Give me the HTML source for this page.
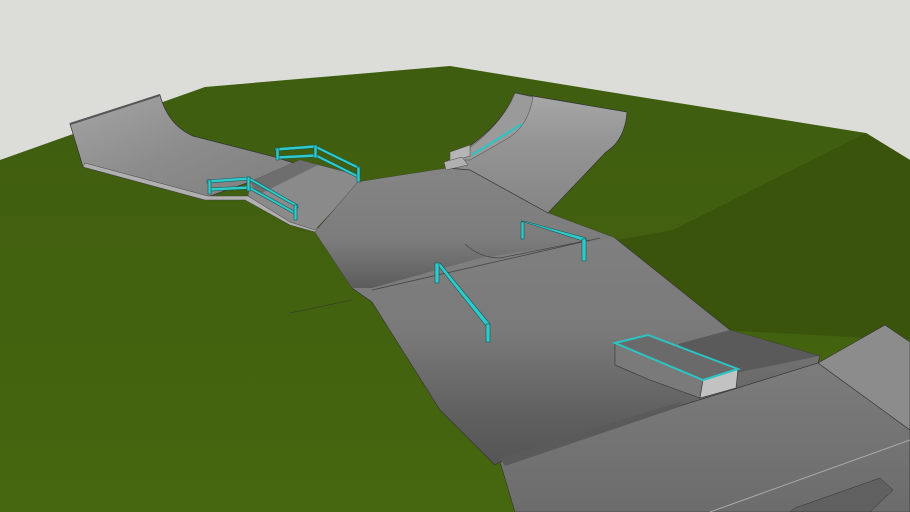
<!DOCTYPE html>
<html><head><meta charset="utf-8"><style>html,body{margin:0;padding:0;background:#dcdcd9;}svg{display:block}</style></head>
<body>
<svg width="910" height="512" viewBox="0 0 910 512" xmlns="http://www.w3.org/2000/svg">
<defs>
<linearGradient id="gr" x1="0" y1="0" x2="0" y2="1"><stop offset="0" stop-color="#3f5d0f"/><stop offset="1" stop-color="#46660f"/></linearGradient>
<linearGradient id="qp" x1="0" y1="0" x2="1" y2="1"><stop offset="0" stop-color="#a5a5a5"/><stop offset="0.5" stop-color="#8c8c8c"/><stop offset="1" stop-color="#7d7d7d"/></linearGradient>
<linearGradient id="qp2" x1="0" y1="0" x2="0" y2="1"><stop offset="0" stop-color="#a8a8a8"/><stop offset="0.4" stop-color="#959595"/><stop offset="1" stop-color="#858585"/></linearGradient>
<linearGradient id="run" x1="0" y1="0" x2="0" y2="1"><stop offset="0" stop-color="#838383"/><stop offset="0.55" stop-color="#7a7a7a"/><stop offset="0.85" stop-color="#5e5e5e"/><stop offset="1" stop-color="#555"/></linearGradient>
<linearGradient id="plaza" x1="0" y1="0" x2="0" y2="1"><stop offset="0" stop-color="#858585"/><stop offset="0.6" stop-color="#7c7c7c"/><stop offset="1" stop-color="#5c5c5c"/></linearGradient>
<linearGradient id="plate" x1="0" y1="0" x2="0" y2="1"><stop offset="0" stop-color="#7c7c7c"/><stop offset="1" stop-color="#6c6c6c"/></linearGradient>
</defs>
<rect width="910" height="512" fill="#dcdcd9"/>
<polygon points="0,160 205,87 450,66 628,95 866,133 910,160 910,512 0,512" fill="url(#gr)"/>
<polygon points="866,133 910,160 910,340 720,330 618,240 673,230" fill="#3a540c"/>
<path d="M70,124 L160,95 Q168,125 193,136 L275,157 L300,165 L250,182 L210,196 L205,200 L83,167 Q78,150 70,124 Z" fill="url(#qp)" stroke="#333" stroke-width="0.7"/>
<polygon points="83,167 205,200 245,200 290,225 315,232 318,228 292,220 248,196 208,196 85,163" fill="#b0b0b0" stroke="#444" stroke-width="0.5"/>
<line x1="70" y1="124" x2="160" y2="95" stroke="#555" stroke-width="2"/>
<polygon points="250,182 300,160 358,175 360,182 315,230 290,222 248,196" fill="#8a8a8a" stroke="#444" stroke-width="0.5"/>
<polygon points="250,182 300,160 318,165 258,195" fill="#6e6e6e"/>
<polygon points="315,232 358,182 448,168 470,170 548,213 615,238 730,330 820,356 818,363 500,462 495,465 440,410 372,302 352,288" fill="url(#run)" stroke="#333" stroke-width="0.6"/>
<polygon points="315,232 358,182 448,168 470,170 548,213 615,238 600,240 480,258 372,288 352,288" fill="url(#plaza)"/>
<line x1="372" y1="290" x2="600" y2="238" stroke="#444" stroke-width="0.8"/>
<path d="M465,244 Q480,258 500,258 L590,240" fill="none" stroke="#444" stroke-width="0.7"/>
<line x1="290" y1="313" x2="352" y2="300" stroke="#333" stroke-width="0.6"/>
<path d="M515,93 L627,112 Q625,140 606,152 L548,213 L470,170 L448,168 L448,160 Q500,130 515,93 Z" fill="url(#qp2)" stroke="#333" stroke-width="0.7"/>
<path d="M515,93 L533,97 Q528,128 505,140 L470,160 L452,160 Q500,130 515,93 Z" fill="#9a9a9a" stroke="#444" stroke-width="0.5"/>
<polygon points="450,152 470,145 470,156 450,162" fill="#b5b5b5" stroke="#444" stroke-width="0.5"/>
<polygon points="444,162 462,157 468,165 446,170" fill="#b0b0b0" stroke="#444" stroke-width="0.5"/>
<line x1="472" y1="155" x2="522" y2="124" stroke="#2cc4c4" stroke-width="2.2"/>
<polygon points="678,344 730,330 820,356 740,372 720,388" fill="#5a5a5a"/>
<polygon points="615,343 703,380 700,398 650,380 615,365" fill="#7a7a7a" stroke="#333" stroke-width="0.6"/>
<polygon points="703,380 738,369 736,388 700,398" fill="#c2c2c2" stroke="#333" stroke-width="0.6"/>
<polygon points="615,343 648,335 738,369 703,380" fill="#6a6a6a" stroke="#2cc4c4" stroke-width="2"/>
<polygon points="500,462 818,363 910,430 910,512 515,512" fill="url(#plate)" stroke="#333" stroke-width="0.6"/>
<polygon points="500,458 680,402 682,406 505,466" fill="#5a5a5a"/>
<polygon points="818,363 885,325 910,342 910,430" fill="#8c8c8c" stroke="#333" stroke-width="0.6"/>
<line x1="710" y1="512" x2="910" y2="440" stroke="#aaa" stroke-width="1"/>
<polygon points="795,508 880,478 893,490 870,512 790,512" fill="#606060" stroke="#333" stroke-width="0.5"/>
<g stroke="#1a5555" stroke-width="0.6" fill="#2fcaca">
<polygon points="275,148 315,145 360,167 360,170 315,148 275,151"/>
<polygon points="277,156 316,154 358,175 358,178 316,157 277,159"/>
<rect x="276" y="148" width="3" height="12"/><rect x="314" y="145" width="3" height="13"/><rect x="357" y="167" width="3" height="15"/>
<polygon points="207,180 249,177 298,205 298,208 249,180 207,183"/>
<polygon points="209,188 249,186 296,212 296,215 249,189 209,191"/>
<rect x="208" y="180" width="3" height="14"/><rect x="247" y="177" width="3" height="14"/><rect x="294" y="205" width="3" height="15"/>
<polygon points="436,263 440,263 490,324 486,326"/>
<rect x="435" y="263" width="4" height="20"/><rect x="486" y="324" width="4" height="18"/>
<polygon points="521,221 524,221 586,238 583,241"/>
<rect x="521" y="222" width="3" height="17"/><rect x="582" y="239" width="4" height="22"/>
</g>
</svg>
</body></html>
